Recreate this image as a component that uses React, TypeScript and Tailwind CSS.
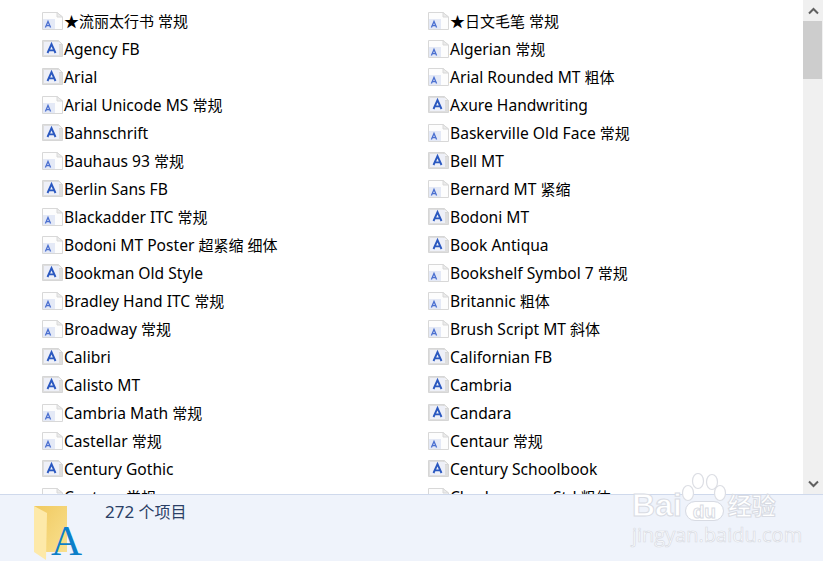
const fonts = [
  ["★流丽太行书 常规", "★日文毛笔 常规"],
  ["Agency FB", "Algerian 常规"],
  ["Arial", "Arial Rounded MT 粗体"],
  ["Arial Unicode MS 常规", "Axure Handwriting"],
  ["Bahnschrift", "Baskerville Old Face 常规"],
  ["Bauhaus 93 常规", "Bell MT"],
  ["Berlin Sans FB", "Bernard MT 紧缩"],
  ["Blackadder ITC 常规", "Bodoni MT"],
  ["Bodoni MT Poster 超紧缩 细体", "Book Antiqua"],
  ["Bookman Old Style", "Bookshelf Symbol 7 常规"],
  ["Bradley Hand ITC 常规", "Britannic 粗体"],
  ["Broadway 常规", "Brush Script MT 斜体"],
  ["Calibri", "Californian FB"],
  ["Calisto MT", "Cambria"],
  ["Cambria Math 常规", "Candara"],
  ["Castellar 常规", "Centaur 常规"],
  ["Century Gothic", "Century Schoolbook"],
  ["Century 常规", "Charlemagne Std 粗体"],
];

// single font file: white page, small A
function FileIcon() {
  return (
    <svg width="22" height="18" viewBox="0 0 22 18" className="shrink-0">
      <path d="M0.5 0.5H15L20.5 5V17.5H0.5Z" fill="#fdfdfd" stroke="#d8d8d8" />
      <path d="M15 0.5V5H20.5Z" fill="#ececec" stroke="#d8d8d8" />
      <rect x="1" y="7" width="12" height="10" fill="#e4e9f6" />
      <path d="M3.4 15.5L6 9.5L8.6 15.5M4.3 13.6H7.7" fill="none" stroke="#4a6fd0" strokeWidth="1.3" />
    </svg>
  );
}

// font family: grey stacked page, bold A
function FamilyIcon() {
  return (
    <svg width="22" height="18" viewBox="0 0 22 18" className="shrink-0">
      <path d="M0.5 0.5H16L20.5 4.5V16.5H0.5Z" fill="#dedede" stroke="#d6d6d6" />
      <path d="M16 0.5V4.5H20.5Z" fill="#f6f6f6" stroke="#d6d6d6" />
      <rect x="2" y="2" width="15" height="13" fill="#eef0f8" />
      <path d="M5.5 13L9.5 4L13.5 13M6.8 10.4H12.2" fill="none" stroke="#2a58c0" strokeWidth="1.9" />
    </svg>
  );
}

function FontItem({ name }: { name: string }) {
  const single = /[\u4e00-\u9fff]/.test(name);
  const parts = name.split(/([\u4e00-\u9fff★]+)/).filter(Boolean);
  return (
    <div className="flex h-7 items-center whitespace-nowrap">
      {single ? <FileIcon /> : <FamilyIcon />}
      <span className="mt-[2px]">
        {parts.map((part, i) =>
          /[\u4e00-\u9fff★]/.test(part) ? (
            <span key={i} className="text-[15px]">{part}</span>
          ) : (
            <span key={i}>{part}</span>
          )
        )}
      </span>
    </div>
  );
}

function Scrollbar() {
  return (
    <div className="flex w-5 shrink-0 flex-col bg-[#f0f0f0]">
      <div className="flex h-[21px] items-center justify-center">
        <svg width="11" height="8" viewBox="0 0 11 8">
          <path d="M1 6.5L5.5 2L10 6.5" fill="none" stroke="#606060" strokeWidth="2" />
        </svg>
      </div>
      <div className="h-[58px] w-[19px] bg-[#cdcdcd]" />
      <div className="flex-1" />
      <div className="flex h-[21px] items-center justify-center">
        <svg width="11" height="8" viewBox="0 0 11 8">
          <path d="M1 1.5L5.5 6L10 1.5" fill="none" stroke="#606060" strokeWidth="2" />
        </svg>
      </div>
    </div>
  );
}

function FolderIcon() {
  return (
    <svg width="50" height="56" viewBox="0 0 50 56" className="shrink-0">
      <defs>
        <linearGradient id="folderBack" x1="0" y1="0" x2="1" y2="1">
          <stop offset="0" stopColor="#f0c95f" />
          <stop offset="1" stopColor="#f9e08f" />
        </linearGradient>
      </defs>
      <path d="M1 2H34V48H12Z" fill="url(#folderBack)" />
      <path d="M1 2L14 9L13 56L1 48Z" fill="#fde9a9" />
      <text x="18" y="51" fontFamily="'Liberation Serif', serif" fontSize="43" fill="#0c7fc8">
        A
      </text>
    </svg>
  );
}

function Watermark() {
  return (
    <div className="pointer-events-none absolute left-[632px] top-[473px] h-[74px] w-[150px] text-white">
      <svg width="50" height="30" viewBox="0 0 50 30" className="absolute left-[48px] top-0" fill="#ffffff" stroke="#dcdee4" strokeWidth="1.2">
        <ellipse cx="8" cy="20" rx="5.5" ry="7.5" />
        <ellipse cx="18" cy="8" rx="5.5" ry="7.5" />
        <ellipse cx="32" cy="9" rx="5.5" ry="7.5" />
        <ellipse cx="40" cy="20" rx="5.5" ry="7.5" />
      </svg>
      <div className="absolute left-0 top-[20px] flex h-[27px] items-end font-['Liberation_Sans',sans-serif] text-[32px] leading-[30px] font-bold [-webkit-text-stroke:1px_#d8dbe3]">
        <span>Bai</span>
        <span className="ml-[4px] flex h-[18px] w-[37px] items-center justify-center rounded-[9px] bg-white text-[19px] leading-none outline outline-[#d8dbe3]">du</span>
        <span className="ml-[5px] font-['Noto_Sans_CJK_SC',sans-serif] text-[24px] leading-[30px]">经验</span>
      </div>
      <div className="absolute left-0 top-[50px] font-['Open_Sans',sans-serif] text-[20px] leading-6 [-webkit-text-stroke:0.7px_#d8dbe3]">
        jingyan.baidu.com
      </div>
    </div>
  );
}

export default function App() {
  return (
    <div className="relative flex h-[561px] w-[823px] flex-col overflow-hidden bg-white font-['Noto_Sans','Noto_Sans_CJK_SC',sans-serif] text-[15.6px] text-black">
      <div className="flex h-[494px] shrink-0 overflow-hidden">
        <div className="grid flex-1 grid-cols-[386px_1fr] content-start pl-[42px] pt-[7px]">
          {fonts.flat().map((name) => (
            <FontItem key={name} name={name} />
          ))}
        </div>
        <Scrollbar />
      </div>
      <div className="flex flex-1 border-t border-[#cfd9ec] bg-[#eff3fb] pl-[33px] pt-[9px]">
        <FolderIcon />
        <div className="ml-[22px] -mt-[2px] text-[17px] leading-5 text-[#2b3f66]">
          272 <span className="text-[16px]">个项目</span>
        </div>
      </div>
      <Watermark />
    </div>
  );
}
